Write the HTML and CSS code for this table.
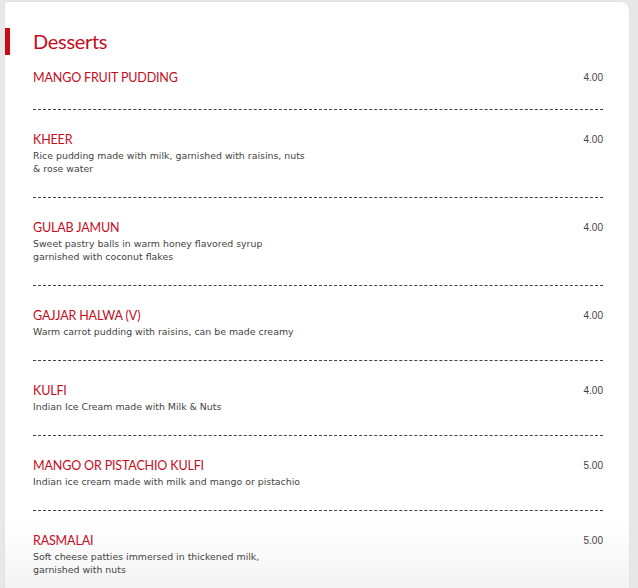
FILE: index.html
```html
<!DOCTYPE html>
<html>
<head>
<meta charset="utf-8">
<link rel="stylesheet" href="styles.css">
</head>
<body>
<div class="card">
  <h2 class="section-title">Desserts</h2>
  <ul class="menu">
    <li class="item">
      <div class="item-main"><div class="name">MANGO FRUIT PUDDING</div></div>
      <div class="price">4.00</div>
    </li>
    <li class="item">
      <div class="item-main"><div class="name">KHEER</div><div class="desc">Rice pudding made with milk, garnished with raisins, nuts<br>&amp; rose water</div></div>
      <div class="price">4.00</div>
    </li>
    <li class="item">
      <div class="item-main"><div class="name">GULAB JAMUN</div><div class="desc">Sweet pastry balls in warm honey flavored syrup<br>garnished with coconut flakes</div></div>
      <div class="price">4.00</div>
    </li>
    <li class="item">
      <div class="item-main"><div class="name">GAJJAR HALWA (V)</div><div class="desc">Warm carrot pudding with raisins, can be made creamy</div></div>
      <div class="price">4.00</div>
    </li>
    <li class="item">
      <div class="item-main"><div class="name">KULFI</div><div class="desc">Indian Ice Cream made with Milk &amp; Nuts</div></div>
      <div class="price">4.00</div>
    </li>
    <li class="item">
      <div class="item-main"><div class="name">MANGO OR PISTACHIO KULFI</div><div class="desc">Indian ice cream made with milk and mango or pistachio</div></div>
      <div class="price">5.00</div>
    </li>
    <li class="item">
      <div class="item-main"><div class="name">RASMALAI</div><div class="desc">Soft cheese patties immersed in thickened milk,<br>garnished with nuts</div></div>
      <div class="price">5.00</div>
    </li>
  </ul>
</div>
</body>
</html>
```
FILE: styles.css
```css
html, body {
  margin: 0;
  padding: 0;
}
body {
  background: #e8e8e8;
  font-family: "DejaVu Sans", sans-serif;
}
.card {
  margin: 2px 0 0 5px;
  width: 624px;
  min-height: 700px;
  box-sizing: border-box;
  padding: 26px 26px 0 28px;
  background: linear-gradient(to bottom, #ffffff 0, #ffffff 520px, #f1f1f1 600px);
  border-radius: 2px 8px 0 0;
  box-shadow: 0 0 2px rgba(0,0,0,0.08);
}
.section-title {
  margin: 0 0 15px -28px;
  padding-left: 23px;
  border-left: 5px solid #cc0a17;
  font-family: "Lato", sans-serif;
  font-weight: normal;
  font-size: 20px;
  letter-spacing: -0.3px;
  line-height: 27px;
  color: #c40d1c;
}
.menu {
  list-style: none;
  margin: 0;
  padding: 0;
}
.item {
  display: flex;
  justify-content: space-between;
  align-items: flex-start;
  padding: 22px 0 22px 0;
  border-bottom: 1px dashed #444;
}
.item:first-child {
  padding-top: 0;
}
.name {
  font-family: "Lato", sans-serif;
  font-size: 12.5px;
  letter-spacing: -0.15px;
  line-height: 15px;
  color: #c40d1c;
  margin-bottom: 2px;
}
.desc {
  font-size: 9.4px;
  line-height: 13px;
  color: #444;
}
.price {
  font-family: "Liberation Sans", sans-serif;
  font-size: 10px;
  line-height: 15px;
  color: #444;
}
```
